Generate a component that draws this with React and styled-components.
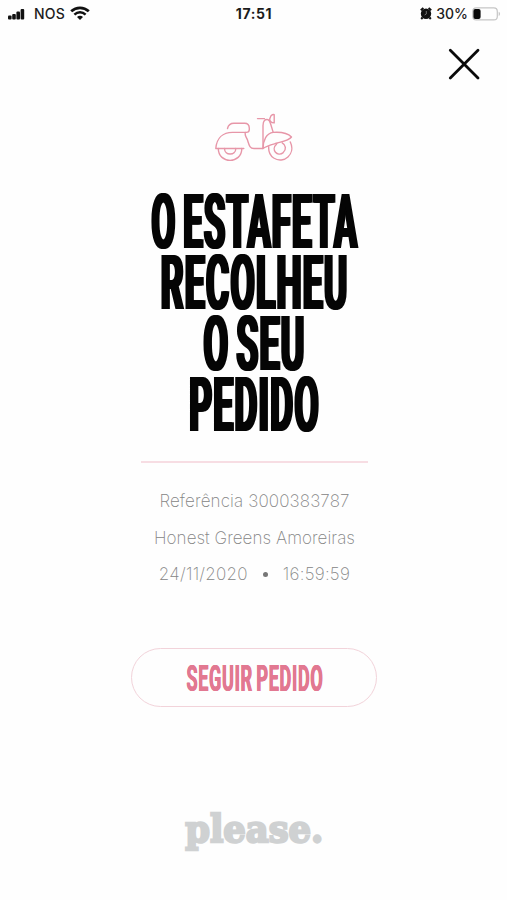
import React from "react";
import styled, { createGlobalStyle } from "styled-components";

const GlobalStyle = createGlobalStyle`
  * {
    box-sizing: border-box;
  }

  body {
    margin: 0;
    background-color: #fefefe;
    font-family: Inter, "Liberation Sans", sans-serif;
  }
`;

const Screen = styled.div`
  width: 507px;
  height: 900px;
  display: flex;
  flex-direction: column;
  align-items: center;
  overflow: hidden;
`;

const StatusBar = styled.header`
  width: 100%;
  height: 27px;
  padding: 0 6px 0 7px;
  display: grid;
  grid-template-columns: 1fr auto 1fr;
  align-items: center;
  color: #1c1c1c;
  font-size: 14px;
  line-height: 27px;
`;

const StatusGroup = styled.div`
  display: flex;
  align-items: center;
  justify-content: ${(props) => (props.$end ? "flex-end" : "flex-start")};
  gap: ${(props) => props.$gap}px;
  font-weight: 500;
`;

const Carrier = styled.span`
  margin: 0 -3px 0 1px;
  letter-spacing: 0.2px;
`;

const Clock = styled.span`
  font-weight: 700;
  font-size: 14px;
  letter-spacing: 0.6px;
`;

const TopRow = styled.div`
  width: 100%;
  height: 74px;
  padding: 20px 26px 0 0;
  display: flex;
  justify-content: flex-end;
  align-items: flex-start;
`;

const CloseButton = styled.button`
  width: 34px;
  height: 34px;
  padding: 0;
  border: none;
  background: none;
`;

const Scooter = styled.svg`
  display: block;
  margin-top: 11px;
`;

const Title = styled.h1`
  margin: 28px 0 0;
  padding-left: 3px;
  display: flex;
  flex-direction: column;
  align-items: center;
  color: #050505;
`;

// tall condensed lettering
const Condensed = styled.span`
  display: block;
  white-space: nowrap;
  font-family: Roboto, "Liberation Sans", sans-serif;
  font-weight: 700;
  font-size: ${(props) => props.$size}px;
  line-height: ${(props) => props.$line}px;
  letter-spacing: 0.04em;
  word-spacing: -0.09em;
  transform: scaleX(${(props) => props.$scale});
  text-shadow: ${(props) =>
    `${props.$heavy}px 0 currentColor, -${props.$heavy}px 0 currentColor`};
`;

const Divider = styled.hr`
  width: 227px;
  height: 2px;
  margin: 25px 0 0 2px;
  border: none;
  background-color: #f7dde3;
`;

const Details = styled.div`
  margin-top: 20px;
  padding-left: 2px;
  display: flex;
  flex-direction: column;
  align-items: center;
  color: #858585;
  font-weight: 200;
  font-size: 17px;
`;

const DetailLine = styled.div`
  height: 36.5px;
  display: flex;
  align-items: center;
  gap: 15px;
  white-space: nowrap;
  letter-spacing: ${(props) => props.$spacing}px;
`;

const Dot = styled.span`
  width: 5px;
  height: 5px;
  border-radius: 50%;
  background-color: #777;
`;

const FollowButton = styled.button`
  width: 246px;
  height: 59px;
  margin-top: 55px;
  padding: 4px 0 0 3px;
  display: flex;
  align-items: center;
  justify-content: center;
  border: 1.5px solid #f2d3da;
  border-radius: 30px;
  background: none;
  color: #e27891;
`;

const Brand = styled.div`
  margin: 97px 0 0 2px;
  color: #cfd1d2;
  font-family: "DejaVu Serif", serif;
  font-weight: 700;
  font-size: 38px;
  line-height: 50px;
  -webkit-text-stroke: 2.4px #cfd1d2;
  transform: scaleX(0.93);
`;

const titleLines = [
  { text: "O ESTAFETA", scale: 0.452 },
  { text: "RECOLHEU", scale: 0.463 },
  { text: "O SEU", scale: 0.465 },
  { text: "PEDIDO", scale: 0.461 },
];

const SignalIcon = () => (
  <svg width="18" height="12" viewBox="0 0 18 12" fill="#111">
    <rect x="1" y="7.5" width="3.6" height="4" rx="1" />
    <rect x="5.2" y="6" width="3.6" height="5.5" rx="1" />
    <rect x="9.4" y="3.5" width="3.6" height="8" rx="1" />
    <rect x="13.6" y="1" width="3.6" height="10.5" rx="1" />
  </svg>
);

const WifiIcon = () => (
  <svg width="20" height="15" viewBox="0 0 20 15" fill="none" stroke="#111">
    <path d="M1.2 5.3C6.3.6 13.7.6 18.8 5.3" strokeWidth="2.8" />
    <path d="M4.4 8.6c3.2-3 8-3 11.2 0" strokeWidth="2.5" />
    <path d="M7 10.9c1.8-1.6 4.2-1.6 6 0l-3 3z" fill="#111" stroke="none" />
  </svg>
);

const AlarmIcon = () => (
  <svg width="12" height="13" viewBox="0 0 12 13">
    <circle cx="6" cy="6.7" r="5.2" fill="#111" />
    <path d="M.8 3.2 3.4 1M11.2 3.2 8.6 1M2.5 10.5 1.2 12M9.5 10.5l1.3 1.5" stroke="#111" strokeWidth="2" />
    <path d="M6.3 4v3L4.6 8" fill="none" stroke="#888" strokeWidth=".8" />
  </svg>
);

const BatteryIcon = () => (
  <svg width="29" height="14" viewBox="0 0 29 14">
    <rect x=".8" y=".9" width="24.5" height="12" rx="3.5" fill="none" stroke="#c5c5c5" strokeWidth="1.2" />
    <rect x="1.4" y="1.9" width="7.2" height="10" rx="2" fill="#080808" />
    <path d="M26.7 4.8c1.8.6 1.8 3.6 0 4.2z" fill="#c5c5c5" />
  </svg>
);

const App = () => {
  return (
    <>
      <GlobalStyle />
      <Screen>
        <StatusBar>
          <StatusGroup $gap={8}>
            <SignalIcon />
            <Carrier>NOS</Carrier>
            <WifiIcon />
          </StatusGroup>
          <Clock>17:51</Clock>
          <StatusGroup $end $gap={4}>
            <AlarmIcon />
            <span>30%</span>
            <BatteryIcon />
          </StatusGroup>
        </StatusBar>

        <TopRow>
          <CloseButton aria-label="Fechar">
            <svg width="34" height="34" viewBox="0 0 34 34" stroke="#0a0a0a" strokeWidth="2.8" strokeLinecap="round">
              <path d="M3.3 3.3 31 31M31 3.3 3.3 31" />
            </svg>
          </CloseButton>
        </TopRow>

        <Scooter width="82" height="52" viewBox="213 112 82 52" fill="none" stroke="#e796a8" strokeWidth="1.4" strokeLinecap="round" strokeLinejoin="round">
          {/* seat and rear body */}
          <path d="M227.5 128.500c.8-3.500 3-5.200 6.500-5.200h10.500c3.300 0 4.800 2 4.800 5v1.200c0 1.800-1.100 2.900-3 2.900h-13.800c-9.500 0-15.800 5.600-16.700 16.100h28" />
          <path d="M245.3 132.500c-.8 3.500 1.200 4.300 2.200 7.500 1.500 4.700 2 8.500 6.500 8.500h8.500" />
          {/* steering column and front fender */}
          <path d="M257.5 118.600h7M263 148.500v-23c0-4.800 2.400-6.300 4.500-6 1.800.2 2.300 1.500 3 4l2.700 8.900c7.300-.5 14.300.4 18.300 4.600-2.500 3.300-8.500 4.500-14 6-7 2-10 2.500-14.500 5.500" />
          <path d="M263 148.500c0-8 3.500-15.500 10.200-16.100M271 115.800c1.300-1.200 2.400-1.500 3.200-1.100v8.200c-2.800-.2-4.500-1.700-4.500-4z" />
          {/* wheels */}
          <path d="M218.3 148.500c0 15.800 23.500 15.800 23.500 0M224.500 148.500c0 7.300 11.300 7.300 11.300 0M290.300 142c5.800 12-6.600 22.500-16.600 16-3.800-2.600-5.300-6.500-5-11.200" />
          <path d="M276.500 144.300c-6 5.200 1 13.200 6.700 8.300 3.300-3 2.800-7.800-1-9.800" />
        </Scooter>

        <Title>
          {titleLines.map((line) => (
            <Condensed key={line.text} $size={76} $line={61} $scale={line.scale} $heavy={3.4}>
              {line.text}
            </Condensed>
          ))}
        </Title>

        <Divider />

        <Details>
          <DetailLine $spacing={0.12}>Referência 3000383787</DetailLine>
          <DetailLine $spacing={0.05}>Honest Greens Amoreiras</DetailLine>
          <DetailLine $spacing={0.25}>
            <span>24/11/2020</span>
            <Dot />
            <span>16:59:59</span>
          </DetailLine>
        </Details>

        <FollowButton>
          <Condensed $size={37} $line={50} $scale={0.486} $heavy={0.6}>
            SEGUIR PEDIDO
          </Condensed>
        </FollowButton>

        <Brand>please.</Brand>
      </Screen>
    </>
  );
};

export default App;
